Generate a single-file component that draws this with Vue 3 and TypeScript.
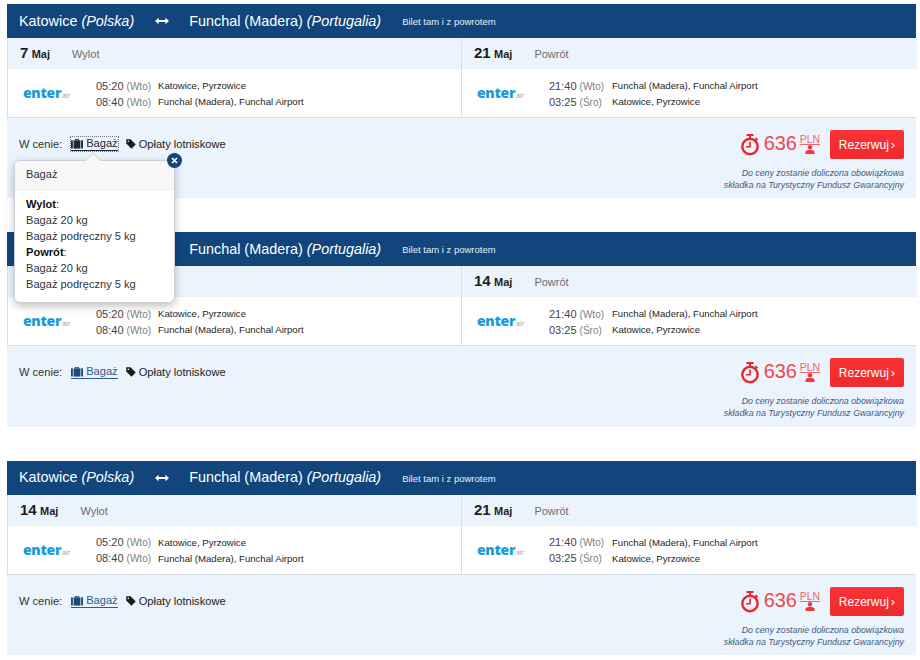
<script setup lang="ts">
interface Offer {
  outDay: string
  backDay: string
  open: boolean
}
const offers: Offer[] = [
  { outDay: '7', backDay: '21', open: true },
  { outDay: '7', backDay: '14', open: false },
  { outDay: '14', backDay: '21', open: false },
]
</script>

<template>
  <div class="page">
    <section v-for="(o, i) in offers" :key="i" class="card">
      <header class="head">
        <span class="city">Katowice <i>(Polska)</i></span>
        <svg class="swap" width="14" height="8" viewBox="0 0 14 8">
          <path d="M0 4 L3.6 0.8 V3 H10.4 V0.8 L14 4 L10.4 7.2 V5 H3.6 V7.2 Z" fill="#fff" />
        </svg>
        <span class="city">Funchal (Madera) <i>(Portugalia)</i></span>
        <span class="kind">Bilet tam i z powrotem</span>
      </header>

      <div class="legs">
        <div class="leg">
          <div class="date">
            <b class="day">{{ o.outDay }}</b> <b class="month">Maj</b>
            <span class="dir">Wylot</span>
          </div>
          <div class="flight">
            <div class="logo">enter<small>air</small></div>
            <div class="times">
              <div class="line"><span class="time">05:20 <em>(Wto)</em></span><span class="place">Katowice, Pyrzowice</span></div>
              <div class="line"><span class="time">08:40 <em>(Wto)</em></span><span class="place">Funchal (Madera), Funchal Airport</span></div>
            </div>
          </div>
        </div>
        <div class="leg second">
          <div class="date">
            <b class="day">{{ o.backDay }}</b> <b class="month">Maj</b>
            <span class="dir">Powrót</span>
          </div>
          <div class="flight">
            <div class="logo">enter<small>air</small></div>
            <div class="times">
              <div class="line"><span class="time">21:40 <em>(Wto)</em></span><span class="place">Funchal (Madera), Funchal Airport</span></div>
              <div class="line"><span class="time">03:25 <em>(Śro)</em></span><span class="place">Katowice, Pyrzowice</span></div>
            </div>
          </div>
        </div>
      </div>

      <footer class="foot">
        <div class="includes">
          <span class="label">W cenie:</span>
          <a class="bag" :class="{ focus: o.open }">
            <svg width="12" height="11" viewBox="0 0 13 11" class="bag-icon">
              <path d="M4.3 2V0.6H8.7V2H7.8V1.4H5.2V2Z" fill="currentColor" />
              <rect x="2.8" y="2" width="7.4" height="9" fill="currentColor" />
              <rect x="0" y="2" width="2" height="9" rx="0.6" fill="currentColor" />
              <rect x="11" y="2" width="2" height="9" rx="0.6" fill="currentColor" />
            </svg>
            <span>Bagaż</span>
          </a>
          <span class="fees">
            <svg width="10" height="10" viewBox="0 0 11 11">
              <path d="M0.3 0.3H5L10.7 6L6 10.7L0.3 5Z" fill="#1b1b1b" />
              <circle cx="2.6" cy="2.6" r="0.9" fill="#ebf3fc" />
            </svg>
            Opłaty lotniskowe
          </span>
        </div>

        <div class="price-col">
          <div class="price-row">
            <svg class="watch" width="18" height="22" viewBox="0 0 18 22">
              <rect x="5.5" y="0" width="7" height="2" fill="#e8262b" />
              <rect x="8" y="1.5" width="2" height="3" fill="#e8262b" />
              <path d="M14.3 4.2L16.4 6.2" stroke="#e8262b" stroke-width="2" />
              <circle cx="9" cy="12.5" r="7.7" fill="none" stroke="#e8262b" stroke-width="2.4" />
              <path d="M9 7.5V12.8H5" fill="none" stroke="#e8262b" stroke-width="1.6" />
            </svg>
            <span class="amount">636</span>
            <span class="unit">
              <span class="pln">PLN</span>
              <svg width="10" height="9" viewBox="0 0 10 9">
                <circle cx="5" cy="2.3" r="2.2" fill="#f0383c" />
                <path d="M0.5 9V7.2C0.5 5.6 2 5 5 5S9.5 5.6 9.5 7.2V9Z" fill="#f0383c" />
              </svg>
            </span>
            <button class="book">Rezerwuj<span class="chev">›</span></button>
          </div>
          <p class="note">Do ceny zostanie doliczona obowiązkowa<br />składka na Turystyczny Fundusz Gwarancyjny</p>
        </div>

        <div v-if="o.open" class="pop">
          <span class="arrow"></span>
          <span class="close">
            <svg width="7" height="7" viewBox="0 0 7 7">
              <path d="M1 1L6 6M6 1L1 6" stroke="#fff" stroke-width="1.7" />
            </svg>
          </span>
          <div class="pop-title">Bagaż</div>
          <div class="pop-body">
            <div><b>Wylot</b>:</div>
            <div>Bagaż 20 kg</div>
            <div>Bagaż podręczny 5 kg</div>
            <div><b>Powrót</b>:</div>
            <div>Bagaż 20 kg</div>
            <div>Bagaż podręczny 5 kg</div>
          </div>
        </div>
      </footer>
    </section>
  </div>
</template>

<style>
html, body { margin: 0; background: #fff; }
</style>

<style scoped>
.page {
  width: 920px;
  height: 660px;
  overflow: hidden;
  box-sizing: border-box;
  padding: 4px 4px 0 7px;
  font-family: "Liberation Sans", Arial, sans-serif;
  color: #1e1e1e;
  display: flex;
  flex-direction: column;
  gap: 34px;
}
.card { flex: none; height: 194.3px; display: flex; flex-direction: column; }
.head {
  height: 34px;
  flex: none;
  background: #11457c;
  color: #fff;
  display: flex;
  align-items: center;
  padding: 0 0 1px 12px;
  box-sizing: border-box;
}
.city { font-size: 14.4px; }
.swap { margin: 1px 20px 0 21px; }
.kind { font-size: 9.5px; margin: 2px 0 0 21px; color: #e8eef5; }
.legs {
  display: grid;
  grid-template-columns: 453px 456px;
  height: 80px;
  flex: none;
  box-sizing: border-box;
  border: 1px solid #d5dfea;
  border-top: 0;
}
.leg { display: flex; flex-direction: column; min-width: 0; }
.second { border-left: 1px solid #d5dfea; }
.date {
  height: 31px;
  flex: none;
  background: #ebf3fc;
  padding: 6px 0 0 12px;
  box-sizing: border-box;
  font-size: 12px;
  line-height: 18px;
  white-space: nowrap;
}
.day { font-size: 15px; }
.month { font-size: 11px; }
.dir { color: #6d6d6d; font-size: 11px; margin-left: 22px; }
.flight { display: flex; align-items: center; flex: 1; background: #fff; }
.logo {
  padding-left: 15px;
  width: 73px;
  font-family: "Open Sans", sans-serif;
  font-weight: 800;
  font-size: 14px;
  letter-spacing: -0.3px;
  color: #1a9bd7;
  line-height: 18px;
  margin-top: 3px;
  flex: none;
}
.logo small { font-size: 6.5px; font-weight: 400; color: #8a9aa5; letter-spacing: 0; margin-left: 1px; }
.second .logo { width: 72px; }
.times { display: flex; flex-direction: column; margin-top: 2px; }
.line { display: flex; height: 16px; line-height: 16px; align-items: center; white-space: nowrap; }
.time { width: 62px; font-size: 11px; color: #444; flex: none; }
.second .time { width: 63px; }
.time em { font-style: normal; font-size: 10px; color: #808080; }
.place { font-size: 9.6px; color: #1e1e1e; }
.foot {
  position: relative;
  flex: 1;
  background: #ebf3fc;
  display: flex;
  justify-content: space-between;
  padding: 0 12px 0 12px;
}
.includes {
  display: flex;
  align-items: center;
  height: 14px;
  margin-top: 19px;
  font-size: 11.1px;
  color: #333;
}
.label { margin-right: 9px; }
.bag {
  display: inline-flex;
  align-items: center;
  gap: 3px;
  color: #2a5b8c;
  border-bottom: 1px solid #2a5b8c;
  height: 13px;
  line-height: 13px;
  margin-right: 8px;
}
.bag-icon { color: #1f4a7a; }
.bag.focus { color: #1b2a3d; outline: 1px dotted #777; border-bottom-color: #1b2a3d; }
.bag.focus .bag-icon { color: #1b2a3d; }
.fees { display: inline-flex; align-items: center; gap: 3px; color: #222; }
.price-col { display: flex; flex-direction: column; align-items: flex-end; }
.price-row { display: flex; align-items: center; margin-top: 12px; height: 29px; }
.watch { margin-right: 5px; margin-top: 1px; }
.amount { font-size: 20px; color: #f4474b; margin: -2px 3px 0 0; }
.unit { display: flex; flex-direction: column; align-items: center; width: 20px; line-height: 11px; margin-bottom: 2px; }
.pln { font-size: 10.5px; color: #f0686b; text-decoration: underline; line-height: 12px; }
.book {
  margin-left: 10px;
  width: 74px;
  height: 29px;
  border: 0;
  border-radius: 2px;
  background: linear-gradient(#fb3236, #ee2a2e);
  color: #fff;
  font-family: inherit;
  font-size: 12px;
  padding: 0;
}
.chev { margin-left: 2px; font-size: 13px; }
.note {
  margin: 8px 0 0;
  font-size: 8.8px;
  line-height: 12px;
  font-style: italic;
  color: #3a5c85;
  text-align: right;
}
.pop {
  position: absolute;
  left: 7px;
  top: 42px;
  width: 161px;
  height: 143px;
  background: #fff;
  border: 1px solid #c8d0da;
  border-radius: 6px;
  box-sizing: border-box;
  box-shadow: 0 3px 8px rgba(0, 0, 0, 0.25);
  z-index: 5;
  font-size: 11.1px;
  color: #333;
}
.arrow {
  position: absolute;
  left: 72px;
  top: -6px;
  width: 11px;
  height: 11px;
  background: #f7f7f7;
  transform: rotate(45deg);
  border-top: 1px solid #d5dbe2;
  border-left: 1px solid #d5dbe2;
}
.close {
  position: absolute;
  right: -8px;
  top: -8px;
  width: 15px;
  height: 15px;
  border-radius: 50%;
  background: #11457c;
  display: flex;
  align-items: center;
  justify-content: center;
  z-index: 2;
}
.pop-title {
  position: relative;
  height: 28px;
  line-height: 26px;
  background: #f7f7f7;
  border-bottom: 1px solid #ebebeb;
  border-radius: 6px 6px 0 0;
  padding-left: 11px;
}
.pop-body { padding: 6px 11px 0; line-height: 16px; white-space: nowrap; }
.pop-body b { color: #111; }
</style>
